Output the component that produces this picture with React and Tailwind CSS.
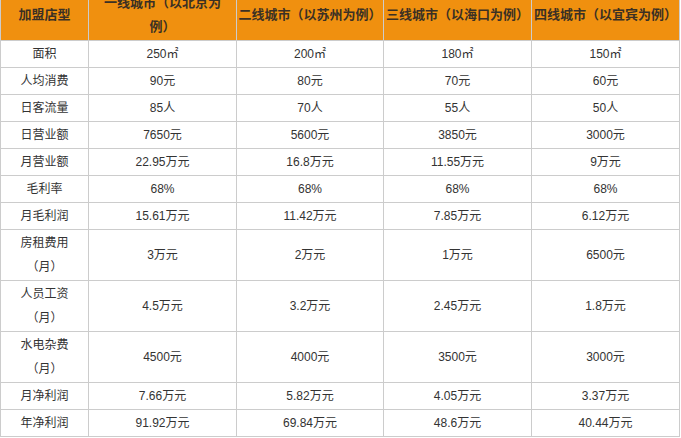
import React from "react";

const headers = [
  ["加盟店型"],
  ["一线城市（以北京为", "例）"],
  ["二线城市（以苏州为例）"],
  ["三线城市（以海口为例）"],
  ["四线城市（以宜宾为例）"],
];

const rows = [
  [["面积"], "250㎡", "200㎡", "180㎡", "150㎡"],
  [["人均消费"], "90元", "80元", "70元", "60元"],
  [["日客流量"], "85人", "70人", "55人", "50人"],
  [["日营业额"], "7650元", "5600元", "3850元", "3000元"],
  [["月营业额"], "22.95万元", "16.8万元", "11.55万元", "9万元"],
  [["毛利率"], "68%", "68%", "68%", "68%"],
  [["月毛利润"], "15.61万元", "11.42万元", "7.85万元", "6.12万元"],
  [["房租费用", "（月）"], "3万元", "2万元", "1万元", "6500元"],
  [["人员工资", "（月）"], "4.5万元", "3.2万元", "2.45万元", "1.8万元"],
  [["水电杂费", "（月）"], "4500元", "4000元", "3500元", "3000元"],
  [["月净利润"], "7.66万元", "5.82万元", "4.05万元", "3.37万元"],
  [["年净利润"], "91.92万元", "69.84万元", "48.6万元", "40.44万元"],
];

export default function App() {
  return (
    <div className="w-[681px] h-[438px] overflow-hidden bg-white">
      <div
        className="mt-[-12px] w-[680px] grid grid-cols-[87px_147px_146px_147px_147px] gap-px bg-[#cccccc] p-px text-[#333333]"
        style={{ fontFamily: '"Liberation Sans", "Noto Sans CJK SC", sans-serif' }}
      >
        {headers.map((h, i) => (
          <div
            key={"h" + i}
            className="h-[51px] bg-[#f0900f] flex flex-col items-center justify-center text-center text-[13px] leading-[24px] font-bold whitespace-nowrap text-[#3b3024]"
          >
            {h.map((l, j) => (
              <span key={j}>{l}</span>
            ))}
          </div>
        ))}
        {rows.map((r, ri) => {
          const tall = r[0].length > 1;
          const hc = tall ? "h-[50px]" : "h-[26px]";
          return (
            <React.Fragment key={ri}>
              <div
                className={`${hc} bg-white flex flex-col items-center justify-center text-center text-[12px] leading-[24px]`}
              >
                {r[0].map((l, j) => (
                  <span key={j}>{l}</span>
                ))}
              </div>
              {r.slice(1).map((c, ci) => (
                <div
                  key={ci}
                  className={`${hc} bg-white flex items-center justify-center text-center text-[12px] leading-[24px] whitespace-nowrap`}
                >
                  {c}
                </div>
              ))}
            </React.Fragment>
          );
        })}
      </div>
    </div>
  );
}
